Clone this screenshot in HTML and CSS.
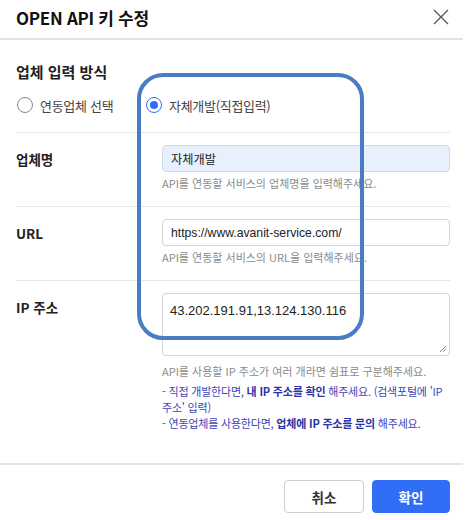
FILE: index.html
```html
<!DOCTYPE html>
<html lang="ko">
<head>
<meta charset="utf-8">
<title>OPEN API 키 수정</title>
<link rel="stylesheet" href="styles.css">
</head>
<body>
<div class="modal">
  <header class="modal-header">
    <h1 class="modal-title">OPEN API 키 수정</h1>
    <button class="close-btn" aria-label="닫기">
      <svg width="16" height="16" viewBox="0 0 16 16"><path d="M1 1 L15 15 M15 1 L1 15" stroke="#555" stroke-width="1.3" fill="none"/></svg>
    </button>
  </header>
  <div class="modal-body">
    <h2 class="section-title">업체 입력 방식</h2>
    <div class="radio-row">
      <label class="radio"><span class="radio-dot"></span><span>연동업체 선택</span></label>
      <label class="radio checked"><span class="radio-dot"></span><span>자체개발(직접입력)</span></label>
    </div>
    <div class="form-row">
      <div class="form-label">업체명</div>
      <div class="form-field">
        <div class="input filled">자체개발</div>
        <p class="help">API를 연동할 서비스의 업체명을 입력해주세요.</p>
      </div>
    </div>
    <div class="form-row">
      <div class="form-label">URL</div>
      <div class="form-field">
        <div class="input">https://www.avanit-service.com/</div>
        <p class="help">API를 연동할 서비스의 URL을 입력해주세요.</p>
      </div>
    </div>
    <div class="form-row last">
      <div class="form-label">IP 주소</div>
      <div class="form-field">
        <div class="textarea">43.202.191.91,13.124.130.116
          <svg class="grip" width="8" height="8" viewBox="0 0 8 8"><path d="M7 1 L1 7 M7 4 L4 7" stroke="#888" stroke-width="1"/></svg>
        </div>
        <p class="help">API를 사용할 IP 주소가 여러 개라면 쉼표로 구분해주세요.</p>
        <ul class="notes">
          <li><span>- 직접 개발한다면,</span> <b>내 IP 주소를 확인</b> <span>해주세요. (검색포털에 'IP</span><br><span>주소' 입력)</span></li>
          <li><span>- 연동업체를 사용한다면,</span> <b>업체에 IP 주소를 문의</b> <span>해주세요.</span></li>
        </ul>
      </div>
    </div>
  </div>
  <footer class="modal-footer">
    <button class="btn btn-cancel">취소</button>
    <button class="btn btn-primary">확인</button>
  </footer>
  <div class="highlight"></div>
</div>
</body>
</html>
```

FILE: styles.css
```css
* { box-sizing: border-box; }
html, body { margin: 0; padding: 0; background: #fff; }
body {
  font-family: "Noto Sans CJK KR", "Noto Sans", sans-serif;
  color: #222;
}
.modal {
  position: relative;
  width: 463px;
  height: 520px;
  display: flex;
  flex-direction: column;
}
.modal-header {
  height: 40px;
  display: flex;
  align-items: center;
  justify-content: space-between;
  padding: 0 16px 4px 16px;
  border-bottom: 2px solid #e2e2e2;
}
.modal-title {
  margin: 0;
  font-size: 17px;
  font-weight: 700;
  letter-spacing: -0.3px;
  color: #111;
}
.close-btn {
  border: 0;
  background: none;
  padding: 0;
  margin-right: -2px;
  display: flex;
}
.modal-body {
  padding: 16px 13px 0 16px;
}
.section-title {
  margin: 5px 0 0 0;
  font-size: 15px;
  font-weight: 700;
  line-height: 22px;
  color: #222;
}
.radio-row {
  display: flex;
  height: 50px;
  align-items: center;
  padding-bottom: 5px;
  border-bottom: 1px solid #e6e6e6;
}
.radio {
  display: flex;
  align-items: center;
  gap: 7px;
  font-size: 13px;
  color: #444;
  letter-spacing: -0.3px;
}
.radio:first-child { width: 130px; padding-left: 1px; }
.radio-dot {
  width: 16px;
  height: 16px;
  border-radius: 50%;
  border: 1px solid #888;
  display: flex;
  align-items: center;
  justify-content: center;
  background: #fff;
}
.radio.checked .radio-dot {
  border: 1.5px solid #2f6ef5;
}
.radio.checked .radio-dot::after {
  content: "";
  width: 8px;
  height: 8px;
  border-radius: 50%;
  background: #2f6ef5;
}
.form-row {
  display: grid;
  grid-template-columns: 146px 1fr;
  padding: 12px 0 15px 0;
  border-bottom: 1px solid #e6e6e6;
}
.form-row.last { border-bottom: 0; }
.form-label {
  font-size: 13.5px;
  font-weight: 700;
  color: #222;
  padding-top: 4px;
  line-height: 20px;
}
.input {
  height: 27px;
  border: 1px solid #d4d4d4;
  border-radius: 4px;
  padding: 0 8px;
  display: flex;
  align-items: center;
  font-family: "Liberation Sans", "Noto Sans CJK KR", sans-serif;
  font-size: 12.2px;
  color: #222;
}
.input.filled { background: #e8f0fe; border-color: #cfd8e6; }
.textarea {
  position: relative;
  height: 63px;
  border: 1px solid #d4d4d4;
  border-radius: 4px;
  padding: 7px 7px;
  font-family: "Liberation Sans", "Noto Sans CJK KR", sans-serif;
  font-size: 13px;
  line-height: 20px;
  color: #222;
}
.grip { position: absolute; right: 2px; bottom: 2px; }
.help {
  margin: 3px 0 0 0;
  font-size: 11px;
  line-height: 16px;
  color: #8a8a8a;
}
.form-row.last .help { margin-top: 7px; }
.notes {
  list-style: none;
  margin: 4px -2px 0 0;
  padding: 0;
  font-size: 11px;
  line-height: 16px;
  color: #3b46b8;
  letter-spacing: -0.2px;
  white-space: nowrap;
}
.notes b { font-weight: 700; color: #2a33a8; }
.modal-footer {
  margin-top: auto;
  border-top: 2px solid #e2e2e2;
  display: flex;
  justify-content: flex-end;
  gap: 8px;
  padding: 15px 13px 7px 0;
}
.btn {
  height: 33px;
  border-radius: 4px;
  font-family: "Noto Sans CJK KR", sans-serif;
  font-size: 13.5px;
  font-weight: 700;
  cursor: pointer;
}
.btn-cancel {
  width: 80px;
  background: #fff;
  border: 1px solid #cfcfcf;
  color: #333;
}
.btn-primary {
  width: 78px;
  background: #2f6ef5;
  border: 1px solid #2f6ef5;
  color: #fff;
}
.highlight {
  position: absolute;
  left: 137px;
  top: 73px;
  width: 227px;
  height: 267px;
  border: 4px solid #4a7cc4;
  border-radius: 26px;
  pointer-events: none;
}
```
